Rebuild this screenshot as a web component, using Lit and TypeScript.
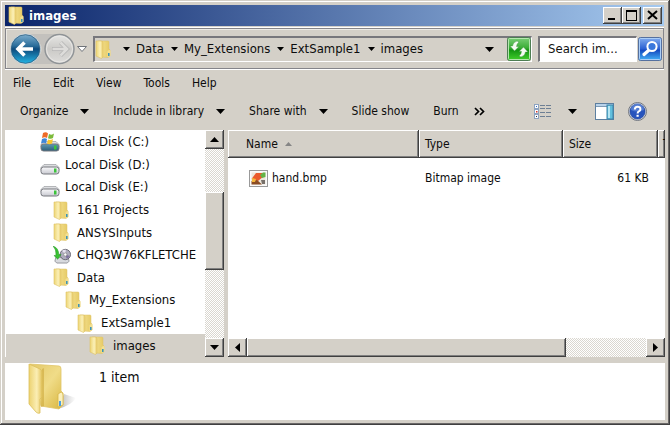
import { LitElement, html, svg, css, nothing } from "lit";
import { customElement } from "lit/decorators.js";
import { classMap } from "lit/directives/class-map.js";

const folder = svg`<svg class="i-folder" viewBox="0 0 48 52" aria-hidden="true">
  <defs>
    <linearGradient id="fb" x1="0" x2="1" y1="0" y2="1"><stop offset="0" stop-color="#e3c868"/><stop offset=".5" stop-color="#f0dc88"/><stop offset="1" stop-color="#d9b640"/></linearGradient>
    <linearGradient id="ff" x1="0" x2="1" y1="0" y2="0"><stop offset="0" stop-color="#ecd270"/><stop offset=".6" stop-color="#fbeeb4"/><stop offset="1" stop-color="#e3c35c"/></linearGradient>
    <linearGradient id="fs" x1="0" x2="1" y1="0" y2="0"><stop offset="0" stop-color="#777" stop-opacity=".6"/><stop offset="1" stop-color="#999" stop-opacity="0"/></linearGradient>
  </defs>
  <path d="M30 46 L36 31 L48 35 Q44 42 30 46Z" fill="url(#fs)"/>
  <path d="M2 1 L31 3 Q33 3 33 6 V28 L35 30 V42 L31 46 L13 43Z" fill="url(#fb)" stroke="#dfc468" stroke-width=".8"/>
  <path d="M14 6 L16 5 V43 L13 44Z" fill="#cda93c" opacity=".6"/>
  <path d="M1 1 L12 6 Q14 7 14 9 V34 L12 36 V50 Q10 51 8 49 L1 41Z" fill="url(#ff)" stroke="#dcbf5c" stroke-width=".8"/>
  <path d="M30 31 Q35 27 35 32 V42 L30 44Z" fill="#fbf0bd" stroke="#d7b548" stroke-width=".8"/>
  <path d="M31 38h2v5h-2z" fill="#4b9fe0"/>
</svg>`;

const smallFolder = svg`<svg class="i-small" viewBox="0 0 17 19" aria-hidden="true">
  <defs>
    <linearGradient id="sb" x1="0" x2="1"><stop offset="0" stop-color="#cfa93c"/><stop offset=".45" stop-color="#efd980"/><stop offset="1" stop-color="#e5c964"/></linearGradient>
    <linearGradient id="sf" x1="0" x2="1"><stop offset="0" stop-color="#ecd473"/><stop offset=".6" stop-color="#fbf0b8"/><stop offset="1" stop-color="#e8cb66"/></linearGradient>
  </defs>
  <path d="M3 1 H13 Q14 1 14 2 V9 L15 10 V16 L13 17.500 L6 17Z" fill="url(#sb)" stroke="#dcc165" stroke-width=".5"/>
  <path d="M1 1 L6 1 Q8 1 8 3 V17 L6.500 18.500 L1 16Z" fill="url(#sf)" stroke="#dfc267" stroke-width=".6"/>
  <path d="M12.500 11 Q15.500 9 15.500 11 V16 L12.500 17Z" fill="#f3e092"/>
  <path d="M13 13h1.600v3H13z" fill="#3f94b8"/>
</svg>`;

const disk = (win: boolean) => svg`<svg class="i-disk" viewBox="0 0 20 20" aria-hidden="true">
  <defs><linearGradient id=${win ? "dw" : "dd"} x1="0" x2="0" y1="0" y2="1"><stop offset="0" stop-color=${win ? "#5e9ab5" : "#fafafc"}/><stop offset="1" stop-color=${win ? "#2c5d78" : "#c8c9d0"}/></linearGradient></defs>
  <path d="M4 9.500 H16 L19 12.500 V15 H1 V12.500Z" fill="#dcdde0" stroke="#9b9da2" stroke-width=".7"/>
  <rect x="1" y="12" width="18" height="7" rx="2.500" fill=${win ? "url(#dw)" : "url(#dd)"} stroke="#77797f"/>
  <rect x="14" y="13.500" width="2.500" height="4" fill="#3bc43b"/>
  ${win ? svg`<path d="M3 1 Q6 -.5 8 1.500 L7 6 Q5 4.500 2 6Z" fill="#ee6b27"/><path d="M9 2 Q12 3.500 14 1.500 L13 6 Q11 7.500 8 6.200Z" fill="#7cba3b"/><path d="M2 7 Q5 5.500 7 7 L6 11.500 Q4 10 1 11.500Z" fill="#3f87d8"/><path d="M8 7.500 Q10 8.500 13 7 L12 11.500 Q9 13 7 11.500Z" fill="#f8c62e"/>` : nothing}
</svg>`;

const netDrive = svg`<svg class="i-net" viewBox="0 0 19 19" aria-hidden="true">
  <path d="M3 12 H16 L17 16 L15 18 H4 L2 16Z" fill="#d8dade" stroke="#808288" stroke-width=".8"/>
  <circle cx="13" cy="9" r="5.500" fill="#aeacbc" stroke="#5f5e6a" stroke-width=".9"/>
  <path d="M13 9 L9.500 5 A5 5 0 0 1 13.500 4Z" fill="#e7e2f0"/><path d="M13 9 L17.500 10.500 A5 5 0 0 1 14.500 13.500Z" fill="#8073a0"/>
  <circle cx="13" cy="9" r="1.700" fill="#fff" stroke="#777" stroke-width=".6"/>
  <path d="M0 0 Q6 2 6 9 H8.500 L5 14 L1 10 H3 Q4 4 0 0Z" fill="#39c132" stroke="#1e8e1d" stroke-width=".5"/>
</svg>`;

const drop = svg`<svg class="i-drop" viewBox="0 0 9 5" aria-hidden="true"><path d="M0 0h9L4.500 5z"/></svg>`;
const dropSmall = svg`<svg class="i-drop-s" viewBox="0 0 7 4" aria-hidden="true"><path d="M0 0h7L3.500 4z"/></svg>`;
const arrow = (d: string) => svg`<svg class="i-arrow" viewBox="0 0 9 9" aria-hidden="true"><path d=${d}/></svg>`;

interface Node { label: string; level: number; icon: "win" | "disk" | "folder" | "net"; }
const tree: Node[] = [
  { label: "Local Disk (C:)", level: 0, icon: "win" },
  { label: "Local Disk (D:)", level: 0, icon: "disk" },
  { label: "Local Disk (E:)", level: 0, icon: "disk" },
  { label: "161 Projects", level: 1, icon: "folder" },
  { label: "ANSYSInputs", level: 1, icon: "folder" },
  { label: "CHQ3W76KFLETCHE", level: 1, icon: "net" },
  { label: "Data", level: 1, icon: "folder" },
  { label: "My_Extensions", level: 2, icon: "folder" },
  { label: "ExtSample1", level: 3, icon: "folder" },
  { label: "images", level: 4, icon: "folder" },
];
const nodeIcon = (n: Node) =>
  n.icon === "folder" ? smallFolder : n.icon === "net" ? netDrive : disk(n.icon === "win");

@customElement("app-root")
export class AppRoot extends LitElement {
  static styles = css`
    :host { display: block; --face: #d4d0c8; --dark: #404040; --mid: #808080; color: #0c0c0c; font: 12px/16px "DejaVu Sans Condensed", "Noto Sans", sans-serif; }
    * { box-sizing: border-box; }
    svg { display: block; flex: none; }
    button { font: inherit; color: inherit; background: none; border: 0; padding: 0; margin: 0; display: flex; align-items: center; white-space: nowrap; }
    .window { min-height: 100vh; display: flex; flex-direction: column; background: var(--face); padding: 5px;
      box-shadow: inset -1px -1px var(--dark), inset 1px 1px var(--face), inset -2px -2px #6a6868, inset 2px 2px #fff; }
    .title { height: 21px; display: flex; align-items: center; background: linear-gradient(90deg, #0a246a, #a6caf0); padding: 0 2px 0 3px; margin-right: 1px; }
    .title h1 { flex: 1; margin: 0 0 0 4px; color: #fff; font-size: 13px; line-height: 16px; font-weight: bold; }
    .raised { background: var(--face); box-shadow: inset -1px -1px var(--dark), inset 1px 1px #fff, inset -2px -2px var(--mid); }
    .cap { width: 19px; height: 17px; justify-content: center; }
    .cap.close { margin-left: 2px; }
    .nav { height: 41px; margin-top: 2px; margin-right: 1px; display: flex; align-items: center; padding: 0 1px 0 4px; border: 1px solid #85858a; box-shadow: 0 1px #fff, 0 -1px #fff, inset 1px 1px #eceae4; font-size: 13px; }
    .travel { width: 82px; height: 32px; }
    .field { display: flex; align-items: center; height: 26px; border: 1px solid; border-color: #77777c #fff #fff #77777c; border-width: 2px 1px 1px 2px; }
    .address { flex: 1; margin-left: 1px; }
    .crumbs { flex: 1; display: flex; align-items: center; list-style: none; margin: 0; padding: 0; }
    .crumbs li { display: flex; align-items: center; }
    .crumbs .i-drop-s { margin: 0 6px 0 7px; }
    .crumbs .root { margin-right: 4px; }
    .address .i-drop { margin-right: 11px; }
    .address .refresh { margin-left: 2px; }
    .search { width: 99px; margin-left: 6px; background: #fff; }
    .search input { width: 100%; border: 0; outline: 0; background: none; padding: 0 0 0 8px; font: inherit; color: #111; }
    .go { margin-left: 1px; }
    .menu { display: flex; align-items: center; gap: 22px; padding: 0 8px; height: 27px; }
    .tools { display: flex; align-items: center; height: 34px; padding: 0 18px 4px 15px; }
    .tools button { gap: 12px; margin-right: 24px; }
    .tools .more { margin-right: auto; margin-left: -10px; }
    .tools .views { gap: 16px; margin-right: 18px; }
    .tools .pane { margin-right: 14px; }
    .tools .help { margin-right: 0; }
    .panes { flex: 1; display: flex; gap: 4px; }
    .side { width: 219px; display: flex; background: #fff; }
    .tree { flex: 1; display: grid; grid-auto-rows: 1fr; margin: 0; padding: 1px 0 0; list-style: none; border-left: 1px solid #fff; font-size: 13px; }
    .tree button { width: 100%; height: 100%; gap: 7px; }
    .tree .lv0 button { padding-left: 34px; gap: 5px; }
    .tree .lv1 button { padding-left: 47px; }
    .tree .lv2 button { padding-left: 59px; }
    .tree .lv3 button { padding-left: 71px; }
    .tree .lv4 button { padding-left: 83px; }
    .tree .on { background: var(--face); }
    .bar { display: flex; background: repeating-conic-gradient(#fff 0 25%, #dad7d0 0 50%) 0 0 / 2px 2px; }
    .bar.v { flex-direction: column; width: 19px; }
    .bar.h { height: 19px; }
    .bar button { width: 19px; height: 19px; justify-content: center; flex: none; }
    .v .before { flex: 43; } .v .thumb { flex: 78; } .v .after { flex: 68; }
    .h .thumb { flex: 319; } .h .after { flex: 80; }
    .main { flex: 1; min-width: 0; display: flex; flex-direction: column; background: #fff; }
    .list { flex: 1; overflow: hidden; }
    table { width: 100%; table-layout: fixed; border-collapse: separate; border-spacing: 0; }
    th { height: 28px; padding: 0 0 0 6px; font-weight: normal; text-align: left; overflow: hidden; white-space: nowrap; }
    th:first-child { padding-left: 18px; }
    th:last-child { padding-left: 5px; }
    th button { gap: 7px; }
    .c1 { width: 191px; } .c2 { width: 144px; } .c3 { width: 95px; }
    td { height: 40px; padding: 0 0 0 6px; }
    td:first-child { padding-left: 21px; }
    td.size { text-align: right; padding-right: 9px; }
    .file { display: flex; align-items: center; gap: 4px; }
    .details { height: 57px; margin-top: 6px; display: flex; background: #fff; padding-left: 23px; }
    .details p { margin: 6px 0 0 23px; font-size: 14px; }
    .i-folder { width: 48px; height: 52px; }
    .i-small { width: 17px; height: 19px; } .i-net { width: 18px; height: 18px; margin-right: -1px; }
    .i-disk { width: 20px; height: 20px; }
    .i-drop { width: 9px; height: 5px; } .i-drop-s { width: 7px; height: 4px; } .i-arrow { width: 9px; height: 9px; }
    .i-24 { width: 24px; height: 24px; } .i-19 { width: 19px; height: 19px; } .i-glyph { width: 13px; height: 13px; }
    .i-sort { width: 7px; height: 4px; }
    .travel svg { width: 82px; height: 32px; }
  `;

  render() {
    return html`<div class="window">
      <header class="title">${smallFolder}<h1>images</h1>
        <button class="cap raised" aria-label="Minimize"><svg class="i-glyph" viewBox="0 0 13 13"><path d="M2 9h7v2H2z"/></svg></button>
        <button class="cap raised" aria-label="Maximize"><svg class="i-glyph" viewBox="0 0 13 13"><path fill-rule="evenodd" d="M1 1h11v11H1zM2 3v8h9V3z"/></svg></button>
        <button class="cap close raised" aria-label="Close"><svg class="i-glyph" viewBox="0 0 13 13"><path d="M2 2l9 8M11 2l-9 8" stroke="#000" stroke-width="2"/></svg></button>
      </header>
      <div class="nav">
        <button class="travel" aria-label="Back and forward"><svg viewBox="0 0 82 32">
          <defs>
            <linearGradient id="bk" x1="0" x2="0" y1="0" y2="1"><stop offset="0" stop-color="#7fb0d0"/><stop offset=".4" stop-color="#2a6c9a"/><stop offset=".5" stop-color="#0d4a7c"/><stop offset="1" stop-color="#25b8e8"/></linearGradient>
            <linearGradient id="fw" x1="0" x2="0" y1="0" y2="1"><stop offset="0" stop-color="#e6e6e4"/><stop offset=".5" stop-color="#cbcac7"/><stop offset="1" stop-color="#dedddb"/></linearGradient>
          </defs>
          <path d="M15 1H50V31H15Q32 24 32 16T15 1" fill="#c3c1bd"/>
          <circle cx="15.500" cy="16" r="15" fill="url(#bk)" stroke="#d5dde2"/><circle cx="15.500" cy="16" r="14.300" fill="none" stroke="#2f5f82" stroke-width=".8"/>
          <path d="M14.500 9.500L8 16L14.500 22.500M8.500 16H23" fill="none" stroke="#fff" stroke-width="3.600"/>
          <circle cx="49.500" cy="16" r="14.500" fill="url(#fw)" stroke="#8f9396" stroke-width="1.400"/><circle cx="49.500" cy="16" r="13" fill="none" stroke="#ecebe9" stroke-width=".8"/>
          <path d="M50.500 9.500L57 16L50.500 22.500M56.500 16H42" fill="none" stroke="#b4b5b4" stroke-width="4.200"/><path d="M50.500 9.500L57 16L50.500 22.500M56 16H42.500" fill="none" stroke="#dddcda" stroke-width="2.600"/>
          <path d="M67.500 13.500H76.500L72 18.500Z" fill="#fff" stroke="#70747a"/>
        </svg></button>
        <div class="field address">
          <ol class="crumbs">
            <li class="root">${smallFolder}</li>
            ${["Data", "My_Extensions", "ExtSample1", "images"].map((c) => html`<li>${dropSmall}<button>${c}</button></li>`)}
          </ol>
          <button aria-label="Previous locations">${drop}</button>
          <button class="refresh" aria-label="Refresh"><svg class="i-24" viewBox="0 0 24 24">
            <defs><linearGradient id="gr" x1="0" x2="0" y1="0" y2="1"><stop offset="0" stop-color="#7ccf78"/><stop offset=".45" stop-color="#3aad36"/><stop offset=".55" stop-color="#149412"/><stop offset="1" stop-color="#43d22d"/></linearGradient></defs>
            <rect x=".5" y=".5" width="23" height="23" rx="2" fill="url(#gr)" stroke="#4d7d52"/><rect x="1.500" y="1.500" width="21" height="21" rx="1" fill="none" stroke="#b4e6ae"/>
            <g fill="#f4fbf2" stroke="#2b8a2b" stroke-width=".4"><path d="M10 4Q6 5 5.500 9H3L7.500 14L12 9.500H9.500Q9.500 7 12 5Z"/><path d="M14 20Q18 19 18.500 15H21L16.500 10L12 14.500H14.500Q14.500 17 12 19Z"/></g>
          </svg></button>
        </div>
        <div class="field search"><input type="text" aria-label="Search images" value="Search im..."></div>
        <button class="go" aria-label="Search"><svg class="i-24" viewBox="0 0 24 24">
          <defs><linearGradient id="bl" x1="0" x2="0" y1="0" y2="1"><stop offset="0" stop-color="#84aef0"/><stop offset=".5" stop-color="#2a5fd2"/><stop offset=".55" stop-color="#1449c0"/><stop offset="1" stop-color="#45b4f8"/></linearGradient></defs>
          <rect x=".5" y=".5" width="23" height="23" rx="2" fill="url(#bl)" stroke="#55709f"/><rect x="1.500" y="1.500" width="21" height="21" rx="1" fill="none" stroke="#a9cdf8"/>
          <path d="M10.500 13.500L6 17.500" stroke="#fff" stroke-width="3.200" stroke-linecap="round"/><circle cx="14" cy="9.500" r="4.600" fill="#3b78dc" stroke="#fff" stroke-width="2"/>
        </svg></button>
      </div>
      <nav class="menu">${["File", "Edit", "View", "Tools", "Help"].map((m) => html`<button>${m}</button>`)}</nav>
      <div class="tools">
        <button>Organize ${drop}</button><button>Include in library ${drop}</button><button>Share with ${drop}</button>
        <button>Slide show</button><button>Burn</button>
        <button class="more" aria-label="More commands"><svg class="i-glyph" viewBox="0 0 13 13"><path d="M2 3l3.500 3.500L2 10M7 3l3.500 3.500L7 10" fill="none" stroke="#000" stroke-width="1.700"/></svg></button>
        <button class="views" aria-label="Change your view"><svg class="i-19" viewBox="0 0 19 19">
          <path d="M7 3.500h5M13 3.500h5M7 6.500h5M13 6.500h5M7 10.500h5M13 10.500h5M7 14.500h5M13 14.500h5" stroke="#6d7f94"/>
          <g fill="#fff" stroke="#8ea3c0"><rect x="1.500" y="2.500" width="4" height="4"/><rect x="1.500" y="7.500" width="4" height="4"/><rect x="1.500" y="12.500" width="4" height="4"/></g>
          <path d="M3 4h1v1H3z" fill="#2c66c8"/><path d="M3 9h1.500v1.500H3z" fill="#d83525"/><path d="M3 14h1v1H3z" fill="#333"/>
        </svg>${drop}</button>
        <button class="pane" aria-label="Show the preview pane"><svg class="i-19" viewBox="0 0 19 19">
          <rect x=".5" y="1.500" width="18" height="16" fill="#fff" stroke="#5d7fa0"/><path d="M1 2h17v2H1z" fill="#b8d2ea"/><path d="M1 4.500h11" stroke="#7d9ab5"/>
          <rect x="12" y="3" width="6" height="14" fill="#62bfdd" stroke="#3d84a8"/><path d="M13 4h2v12h-2z" fill="#b5e6f3"/>
        </svg></button>
        <button class="help" aria-label="Help"><svg class="i-19" viewBox="0 0 19 19">
          <circle cx="9.500" cy="9.500" r="9" fill="#dfe3ea" stroke="#70757e"/><circle cx="9.500" cy="9.500" r="7.600" fill="#2754bd" stroke="#173a8f" stroke-width=".6"/><path d="M3 8a6.500 6.500 0 0 1 13 0Q9 11 3 8" fill="#6f96e0" opacity=".6"/>
          <path d="M6.800 7.500Q6.800 4.700 9.600 4.700T12.400 7.200Q12.400 8.500 10.800 9.400Q9.600 10 9.600 11.500" fill="none" stroke="#fff" stroke-width="2"/><path d="M8.500 12.800h2.200v2H8.500z" fill="#fff"/>
        </svg></button>
      </div>
      <div class="panes">
        <aside class="side">
          <ul class="tree">${tree.map((n, i) => html`<li class=${classMap({ ["lv" + n.level]: true, on: i === tree.length - 1 })}><button>${nodeIcon(n)}${n.label}</button></li>`)}</ul>
          <div class="bar v"><button class="raised" aria-label="Scroll up">${arrow("M0 7h9L4.500 2z")}</button><div class="before"></div><div class="thumb raised"></div><div class="after"></div><button class="raised" aria-label="Scroll down">${arrow("M0 2h9L4.500 7z")}</button></div>
        </aside>
        <main class="main">
          <div class="list"><table>
            <colgroup><col class="c1"><col class="c2"><col class="c3"><col></colgroup>
            <thead><tr><th class="raised"><button>Name <svg class="i-sort" viewBox="0 0 7 4"><path d="M0 4h7L3.500 0z" fill="#858585"/></svg></button></th><th class="raised">Type</th><th class="raised">Size</th><th class="raised">T</th></tr></thead>
            <tbody><tr><td><span class="file"><svg class="i-19" viewBox="0 0 19 19">
              <rect x=".5" y="1.500" width="18" height="16" fill="#fafafa" stroke="#999"/><path d="M2.500 3.500h14v12h-14z" fill="#ece7dc"/>
              <path d="M2.500 10L7 4H13L15 7L9 12L5 11Z" fill="#ea5a2c"/><path d="M11 6l3-2.500h2.500V8L13 9Z" fill="#64b346"/><path d="M2.500 12L8 11L13 15.500H2.500Z" fill="#8b4b22"/><path d="M3 9l4 1-1 3H3z" fill="#f5b63c"/><path d="M12 11h4v4h-3z" fill="#77706a"/>
            </svg>hand.bmp</span></td><td>Bitmap image</td><td class="size">61 KB</td><td></td></tr></tbody>
          </table></div>
          <div class="bar h"><button class="raised" aria-label="Scroll left">${arrow("M7 0v9L2 4.500z")}</button><div class="thumb raised"></div><div class="after"></div><button class="raised" aria-label="Scroll right">${arrow("M2 0v9L7 4.500z")}</button></div>
        </main>
      </div>
      <footer class="details">${folder}<p>1 item</p></footer>
    </div>`;
  }
}
